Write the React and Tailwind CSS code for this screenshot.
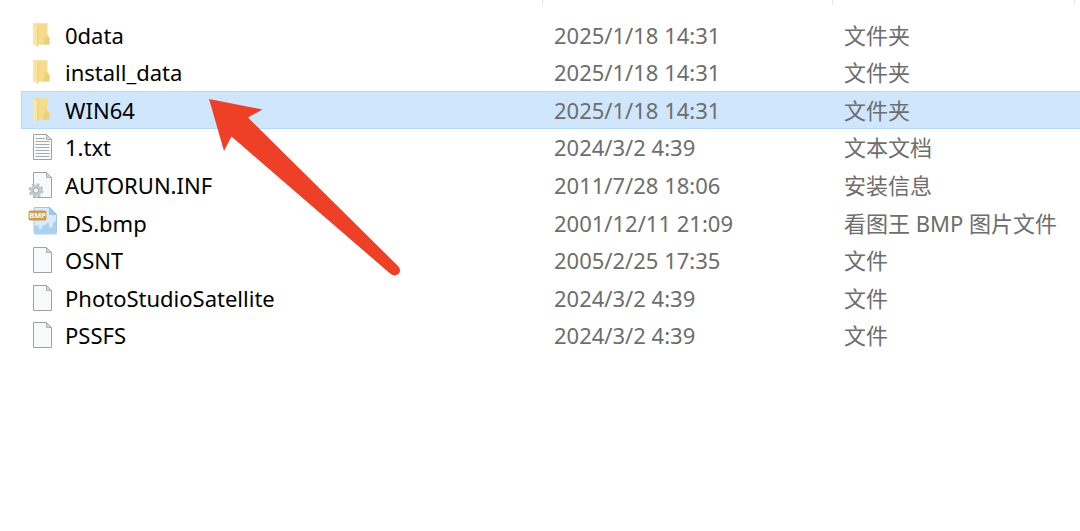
import React, { useState } from 'react';

const files = [
    { name: '0data', date: '2025/1/18 14:31', type: '文件夹', icon: 'folder' },
    { name: 'install_data', date: '2025/1/18 14:31', type: '文件夹', icon: 'folder' },
    { name: 'WIN64', date: '2025/1/18 14:31', type: '文件夹', icon: 'folder' },
    { name: '1.txt', date: '2024/3/2 4:39', type: '文本文档', icon: 'text' },
    { name: 'AUTORUN.INF', date: '2011/7/28 18:06', type: '安装信息', icon: 'inf' },
    { name: 'DS.bmp', date: '2001/12/11 21:09', type: '看图王 BMP 图片文件', icon: 'bmp' },
    { name: 'OSNT', date: '2005/2/25 17:35', type: '文件', icon: 'file' },
    { name: 'PhotoStudioSatellite', date: '2024/3/2 4:39', type: '文件', icon: 'file' },
    { name: 'PSSFS', date: '2024/3/2 4:39', type: '文件', icon: 'file' },
];

const FolderIcon = () => (
    <>
        <path d="M4 2.300H18.500V15L20.500 17V23.500H7Z" fill="#f5dc8b" />
        <path d="M16 15L18.500 14.500L20.500 17V23.500H14Z" fill="#efd078" />
        <path d="M4 2.300L9 6V26L4 23Z" fill="#fae5a2" />
        <path d="M8.800 6V25.500" stroke="#ebcb76" strokeWidth="0.9" />
    </>
);

const Page = () => (
    <>
        <path d="M4.500 1.500H17.500L22.500 6.500V26.500H4.500Z" fill="#f8f9fa" stroke="#a0a0a0" />
        <path d="M17.500 1.500V6.500H22.500Z" fill="#d6d9db" stroke="#a8a8a8" strokeWidth="0.9" />
    </>
);

const TextIcon = () => (
    <>
        <Page />
        <path d="M6.500 5.500H16M6.500 8.500H20.500M6.500 11.500H20.500M6.500 14.500H20.500M6.500 17.500H20.500M6.500 20.500H20.500M6.500 23.500H20.500" stroke="#a9a9a9" strokeWidth="1.1" />
    </>
);

const InfIcon = () => (
    <>
        <Page />
        <circle cx="7" cy="19.5" r="6" fill="none" stroke="#b5bdc4" strokeWidth="2.8" strokeDasharray="2.6 2.11" />
        <circle cx="7" cy="19.5" r="4.2" fill="none" stroke="#c3cbd1" strokeWidth="3" />
        <circle cx="7" cy="19.5" r="2.7" fill="#f7f9fa" stroke="#929ca5" strokeWidth="0.9" />
    </>
);

const BmpIcon = () => (
    <>
        <path d="M5 -1.500H20.500L27.500 5.500V23.500Q27.500 25 26 25H6.500Q5 25 5 23.500Z" fill="#d9ebf9" stroke="#a5c8e2" />
        <path d="M5.500 17C8 15.500 10 16 10 18C8 21 14 21.500 13 18C13 15.500 16 17 18 14.500C20 13.500 21 14 20 17C19.500 20 25 19 23.500 16C23 14 25 13 27 12V24.500H5.500Z" fill="#a9d0ee" />
        <path d="M20.500 -1.500V5.500H27.500Z" fill="#9bcbed" stroke="#84b9de" strokeWidth="0.7" />
        <rect x="0" y="2" width="17" height="9" rx="1" fill="#d5a047" stroke="#c28e39" strokeWidth="0.8" />
        <text x="8.5" y="9.3" textAnchor="middle" fontSize="7.5" fontWeight="700" fill="#ffffff">BMP</text>
    </>
);

const icons = {
    folder: FolderIcon,
    text: TextIcon,
    inf: InfIcon,
    bmp: BmpIcon,
    file: Page,
};

const FileIcon = ({ kind }) => {
    const Drawing = icons[kind];
    return (
        <svg viewBox="0 0 28 28" className="w-7 h-7 shrink-0 overflow-visible" aria-hidden="true">
            <Drawing />
        </svg>
    );
};

const Pointer = () => (
    <svg viewBox="0 0 192 177" className="absolute left-[209px] top-[99px] w-48 pointer-events-none" aria-hidden="true">
        <path d="M0 0L53.500 10.500L39 18.500L189.500 167.500Q193 173 188.500 175.500Q184.500 178 180.500 174L22.500 37.500L15 52Z" fill="#ed4027" />
    </svg>
);

const App = () => {
    const [selected, setSelected] = useState('WIN64');

    return (
        <div className="relative min-h-screen bg-white overflow-hidden pl-[21px] font-['Noto_Sans','Noto_Sans_CJK_SC',sans-serif]">
            <table className="w-full h-[354px] table-fixed border-separate border-spacing-0 text-left text-[22px] leading-8">
                <thead>
                    <tr className="h-4 align-top">
                        <th aria-label="名称" className="p-0" />
                        <th aria-label="修改日期" className="w-[290px] p-0">
                            <div className="h-[5px] border-l border-[#e5e5e5]" />
                        </th>
                        <th aria-label="类型" className="w-[248px] p-0 pr-[5px]">
                            <div className="h-[5px] border-x border-[#e5e5e5]" />
                        </th>
                    </tr>
                </thead>
                <tbody>
                    {files.map(file => {
                        const active = file.name === selected;
                        const cell = active
                            ? 'p-0 border-y border-[#b5d8f5] bg-[#d0e6fd]'
                            : 'p-0 border-y border-transparent';
                        return (
                            <tr key={file.name} onClick={() => setSelected(file.name)} className="cursor-default">
                                <td className={`${cell} border-l`}>
                                    <div className="flex items-center gap-2 pl-[7px] text-black">
                                        <FileIcon kind={file.icon} />
                                        <span className="truncate">{file.name}</span>
                                    </div>
                                </td>
                                <td className={`${cell} pl-3 text-[#6d6d6d] whitespace-nowrap`}>{file.date}</td>
                                <td className={`${cell} pl-3 text-[#6d6d6d] whitespace-nowrap`}>{file.type}</td>
                            </tr>
                        );
                    })}
                </tbody>
            </table>

            <Pointer />
        </div>
    );
};

export default App;
